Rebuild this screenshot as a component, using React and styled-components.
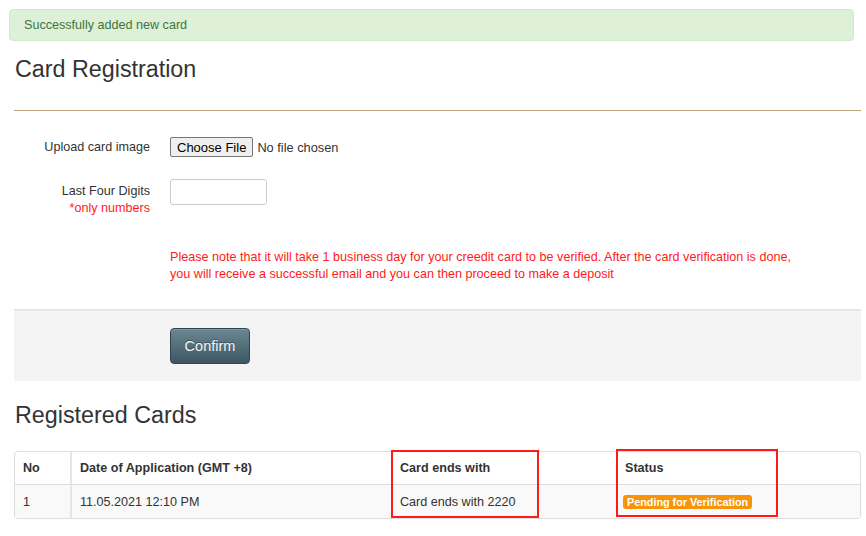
import React from "react";
import styled, { createGlobalStyle } from "styled-components";

const GlobalStyle = createGlobalStyle`
  html, body { margin: 0; padding: 0; background: #fff; }
  body {
    font-family: "Liberation Sans", Arial, sans-serif;
    font-size: 12.6px;
    color: #333;
  }
`;

const Alert = styled.div`
  margin: 9px 12px 0 9px;
  height: 32px;
  box-sizing: border-box;
  padding: 0 14px;
  display: flex;
  align-items: center;
  background: #dff0d8;
  border: 1px solid #d6e9c6;
  border-radius: 4px;
  color: #3c763d;
  font-size: 12.6px;
`;

const Main = styled.div`
  padding: 0 5px 0 14px;
`;

const Heading = styled.h3`
  margin: ${(p) => p.$top}px 0 0 1px;
  font-size: 23.3px;
  font-weight: normal;
  line-height: 26px;
  color: #333;
`;

const Rule = styled.hr`
  margin: 28px 0 0 0;
  border: 0;
  border-top: 1px solid #bfa57d;
  height: 0;
`;

const FormBody = styled.div`
  display: grid;
  grid-template-columns: 136px 1fr;
  column-gap: 20px;
  padding-top: 26px;
`;

const Label = styled.div`
  text-align: right;
  line-height: 17px;
  color: #333;
  padding-top: ${(p) => p.$pt || 0}px;
`;

const Hint = styled.div`
  color: #ff1a1a;
`;

const Field = styled.div`
  margin-bottom: ${(p) => p.$mb || 0}px;
  line-height: 17px;
`;

const FileInput = styled.input`
  font-family: "Liberation Sans", Arial, sans-serif;
  font-size: 12.8px;
  color: #333;
  &::file-selector-button {
    font-family: "Liberation Sans", Arial, sans-serif;
    font-size: 13px;
    background: #efefef;
    border: 1px solid #767676;
    border-radius: 2px;
    padding: 1px 6px;
    margin-right: 4px;
    color: #000;
    height: 20px;
  }
`;

const TextInput = styled.input`
  box-sizing: border-box;
  width: 97px;
  height: 26px;
  border: 1px solid #ccc;
  border-radius: 3px;
  display: block;
`;

const Note = styled.div`
  color: #ff1a1a;
  line-height: 17px;
  margin-top: 32px;
  padding-bottom: 26px;
`;

const Footer = styled.div`
  background: #f4f4f4;
  border-top: 2px solid #e6e6e6;
  padding: 17px 0 17px 156px;
`;

const ConfirmButton = styled.button`
  width: 80px;
  height: 36px;
  border: 1px solid #2f4650;
  border-radius: 4px;
  background: linear-gradient(to bottom, #6a8791, #3d5762);
  color: #f4f7f8;
  font-family: "Liberation Sans", Arial, sans-serif;
  font-size: 14.5px;
  text-shadow: 0 -1px 0 rgba(0, 0, 0, 0.35);
  box-shadow: inset 0 1px 0 rgba(255, 255, 255, 0.15);
  cursor: pointer;
`;

const TableWrap = styled.div`
  position: relative;
  margin-top: 23px;
`;

const Table = styled.table`
  width: 100%;
  table-layout: fixed;
  border-collapse: separate;
  border-spacing: 0;
  border: 1px solid #ddd;
  border-radius: 4px;
  overflow: hidden;
  font-size: 12.6px;
`;

const Th = styled.th`
  text-align: left;
  font-weight: bold;
  height: 32px;
  padding: 0 8px;
  border-bottom: 1px solid #ddd;
  border-right: ${(p) => (p.$divider ? "2px solid #e5e5e5" : "0")};
  color: #333;
`;

const Td = styled.td`
  height: 33px;
  padding: 0 8px;
  background: #f9f9f9;
  border-right: ${(p) => (p.$divider ? "2px solid #e5e5e5" : "0")};
  color: #333;
`;

const Badge = styled.span`
  display: inline-block;
  margin-left: -2px;
  background: #f89406;
  color: #fff;
  font-weight: bold;
  font-size: 10.8px;
  line-height: 14px;
  padding: 0 4px;
  border-radius: 3px;
`;

const Highlight = styled.div`
  position: absolute;
  border: 2px solid #ff1a1a;
  box-sizing: border-box;
  pointer-events: none;
`;

export default function App() {
  return (
    <>
      <GlobalStyle />
      <Alert>Successfully added new card</Alert>
      <Main>
        <Heading $top={15}>Card Registration</Heading>
        <Rule />
        <FormBody>
          <Label $pt={2}>Upload card image</Label>
          <Field $mb={22}>
            <FileInput type="file" />
          </Field>
          <Label $pt={4}>
            Last Four Digits
            <Hint>*only numbers</Hint>
          </Label>
          <Field>
            <TextInput type="text" />
          </Field>
          <div />
          <Note>
            Please note that it will take 1 business day for your creedit card to be verified. After the card verification is done,
            <br />
            you will receive a successful email and you can then proceed to make a deposit
          </Note>
        </FormBody>
        <Footer>
          <ConfirmButton>Confirm</ConfirmButton>
        </Footer>
        <Heading $top={21}>Registered Cards</Heading>
        <TableWrap>
          <Table>
            <colgroup>
              <col style={{ width: 57 }} />
              <col style={{ width: 320 }} />
              <col style={{ width: 225 }} />
              <col />
            </colgroup>
            <thead>
              <tr>
                <Th $divider>No</Th>
                <Th>Date of Application (GMT +8)</Th>
                <Th>Card ends with</Th>
                <Th>Status</Th>
              </tr>
            </thead>
            <tbody>
              <tr>
                <Td $divider>1</Td>
                <Td>11.05.2021 12:10 PM</Td>
                <Td>Card ends with 2220</Td>
                <Td>
                  <Badge>Pending for Verification</Badge>
                </Td>
              </tr>
            </tbody>
          </Table>
          <Highlight style={{ left: 377, top: -1, width: 148, height: 68 }} />
          <Highlight style={{ left: 602, top: -2, width: 162, height: 68 }} />
        </TableWrap>
      </Main>
    </>
  );
}
